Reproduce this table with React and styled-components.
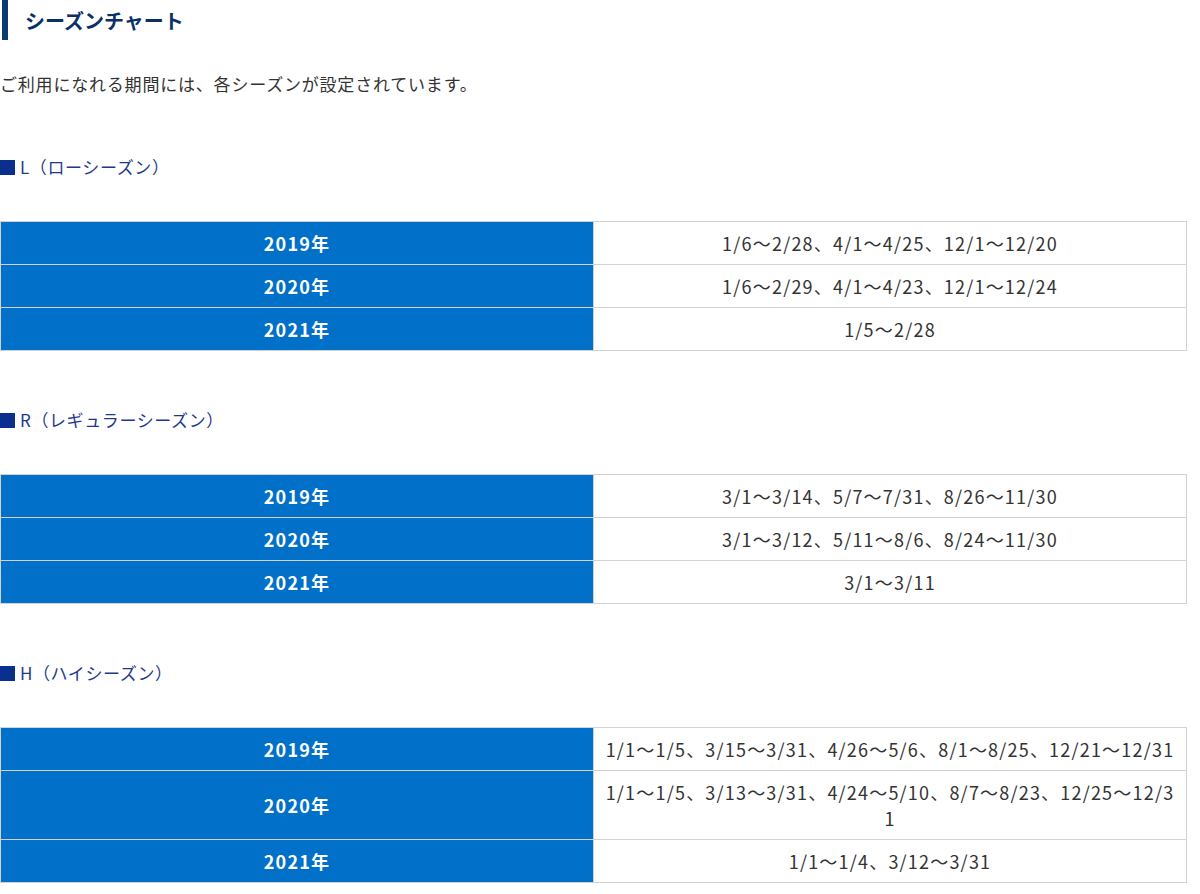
import styled, { createGlobalStyle } from "styled-components";

const seasons = [
  {
    code: "L",
    name: "ローシーズン",
    rows: [
      ["2019年", "1/6〜2/28、4/1〜4/25、12/1〜12/20"],
      ["2020年", "1/6〜2/29、4/1〜4/23、12/1〜12/24"],
      ["2021年", "1/5〜2/28"],
    ],
  },
  {
    code: "R",
    name: "レギュラーシーズン",
    rows: [
      ["2019年", "3/1〜3/14、5/7〜7/31、8/26〜11/30"],
      ["2020年", "3/1〜3/12、5/11〜8/6、8/24〜11/30"],
      ["2021年", "3/1〜3/11"],
    ],
  },
  {
    code: "H",
    name: "ハイシーズン",
    rows: [
      ["2019年", "1/1〜1/5、3/15〜3/31、4/26〜5/6、8/1〜8/25、12/21〜12/31"],
      ["2020年", "1/1〜1/5、3/13〜3/31、4/24〜5/10、8/7〜8/23、12/25〜12/31"],
      ["2021年", "1/1〜1/4、3/12〜3/31"],
    ],
  },
];

export default function App() {
  return (
    <>
      <GlobalStyle />
      <Page>
        <Title>シーズンチャート</Title>
        <Intro>ご利用になれる期間には、各シーズンが設定されています。</Intro>
        {seasons.map((s) => (
          <Section key={s.code}>
            <Label>
              <Square />
              {s.code}（{s.name}）
            </Label>
            <Table>
              <tbody>
                {s.rows.map(([year, dates]) => (
                  <tr key={year}>
                    <Year>{year}</Year>
                    <Dates>{dates}</Dates>
                  </tr>
                ))}
              </tbody>
            </Table>
          </Section>
        ))}
      </Page>
    </>
  );
}

const GlobalStyle = createGlobalStyle`
  body {
    margin: 0;
    background: #ffffff;
    font-family: "Noto Sans CJK JP", "Noto Sans", sans-serif;
    color: #333333;
  }
`;

const Page = styled.main`
  width: 1187px;
`;

const Title = styled.h2`
  margin: 0 0 0 2px;
  padding: 0 0 0 17px;
  height: 40px;
  border-left: 6px solid #0d3a70;

  display: flex;
  align-items: center;

  font-size: 20px;
  font-weight: 700;
  color: #0b3068;
`;

const Intro = styled.p`
  margin: 28px 0 0;
  font-size: 17px;
  letter-spacing: 0.8px;
  line-height: 32px;
  color: #333333;
`;

const Section = styled.section`
  margin-top: 52px;

  & + & {
    margin-top: 54px;
  }
`;

const Label = styled.h3`
  margin: 0 0 39px;
  display: flex;
  align-items: center;
  gap: 5px;

  font-size: 17px;
  font-weight: 400;
  letter-spacing: 0.6px;
  line-height: 30px;
  color: #1d3a8a;
`;

const Square = styled.span`
  width: 15px;
  height: 15px;
  background: #0b2f8f;
`;

const Table = styled.table`
  width: 100%;
  border-collapse: collapse;
  table-layout: fixed;

  td {
    box-sizing: border-box;
    border: 1px solid #d2d2d2;
    padding: 8px 10px;
    font-size: 18px;
    letter-spacing: 1.2px;
    line-height: 26px;
    text-align: center;
    word-break: break-all;
  }
`;

const Year = styled.td`
  width: 50%;
  background: #0070c9;
  color: #ffffff;
  font-weight: 700;
`;

const Dates = styled.td`
  background: #ffffff;
  color: #333333;
`;
